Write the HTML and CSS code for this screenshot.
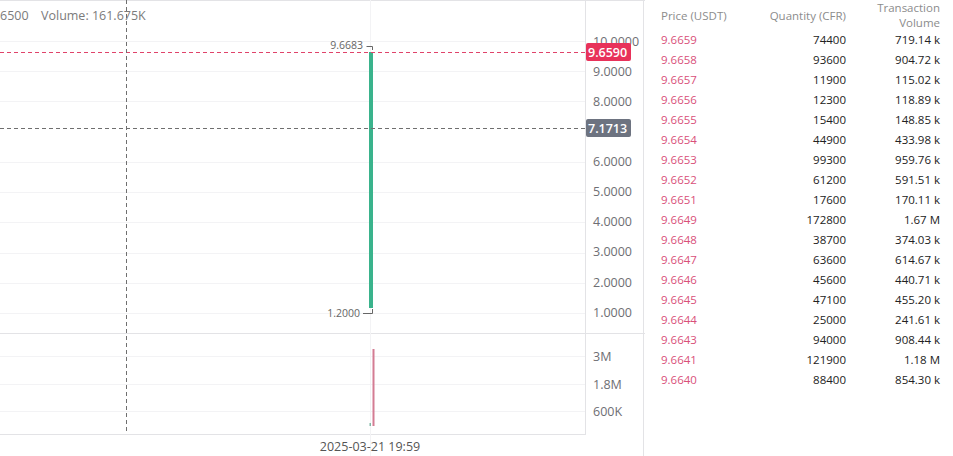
FILE: index.html
```html
<!DOCTYPE html>
<html lang="en">
<head>
<meta charset="utf-8">
<title>Chart and order book</title>
<link rel="stylesheet" href="styles.css">
</head>
<body>
<div class="page">
  <section class="chart">
    <svg class="chart-svg" width="645" height="456" viewBox="0 0 645 456">
      <!-- frame -->
      <line class="frame" x1="0" y1="0.5" x2="645" y2="0.5"/>
      <line class="frame" x1="585.5" y1="0" x2="585.5" y2="434"/>
      <line class="frame" x1="643.5" y1="0" x2="643.5" y2="456"/>
      <line class="frame" x1="0" y1="333.5" x2="645" y2="333.5"/>
      <line class="frame" x1="0" y1="434.5" x2="586" y2="434.5"/>
      <!-- grid -->
      <g class="grid">
        <line x1="0" y1="41.5" x2="585" y2="41.5"/>
        <line x1="0" y1="71.5" x2="585" y2="71.5"/>
        <line x1="0" y1="101.5" x2="585" y2="101.5"/>
        <line x1="0" y1="162.5" x2="585" y2="162.5"/>
        <line x1="0" y1="192.5" x2="585" y2="192.5"/>
        <line x1="0" y1="222.5" x2="585" y2="222.5"/>
        <line x1="0" y1="253.5" x2="585" y2="253.5"/>
        <line x1="0" y1="283.5" x2="585" y2="283.5"/>
        <line x1="0" y1="313.5" x2="585" y2="313.5"/>
        <line x1="0" y1="356.5" x2="585" y2="356.5"/>
        <line x1="0" y1="384.5" x2="585" y2="384.5"/>
        <line x1="0" y1="411.5" x2="585" y2="411.5"/>
        <line x1="370.5" y1="0" x2="370.5" y2="456"/>
      </g>
      <!-- legend -->
      <text class="legend" x="0" y="20">6500</text>
      <text class="legend" x="41" y="20">Volume: 161.675K</text>
      <!-- price axis labels -->
      <g class="axis">
        <text x="593" y="46">10.0000</text>
        <text x="593" y="76">9.0000</text>
        <text x="593" y="106">8.0000</text>
        <text x="593" y="166">6.0000</text>
        <text x="593" y="196">5.0000</text>
        <text x="593" y="226">4.0000</text>
        <text x="593" y="256">3.0000</text>
        <text x="593" y="287">2.0000</text>
        <text x="593" y="317">1.0000</text>
        <text x="593" y="361">3M</text>
        <text x="593" y="389">1.8M</text>
        <text x="593" y="416">600K</text>
      </g>
      <!-- candle -->
      <rect class="up" x="369" y="52" width="4" height="256"/>
      <text class="mark" x="363" y="49" text-anchor="end">9.6683</text>
      <path class="tick" d="M366.5 46.5 H372.5 V50"/>
      <text class="mark" x="360" y="317" text-anchor="end">1.2000</text>
      <path class="tick" d="M363 313.5 H372.5 V309"/>
      <!-- volume -->
      <rect class="vol" x="372.5" y="349" width="2" height="77"/>
      <rect class="vol-up" x="369.5" y="423" width="1.5" height="3"/>
      <!-- last price line -->
      <line class="last" x1="0" y1="52.5" x2="586" y2="52.5"/>
      <rect class="last-box" x="586" y="43" width="45" height="18" rx="2"/>
      <text class="tag" x="588" y="57">9.6590</text>
      <!-- crosshair -->
      <line class="cross" x1="126.5" y1="0" x2="126.5" y2="434"/>
      <line class="cross" x1="0" y1="128.5" x2="586" y2="128.5"/>
      <rect class="cross-box" x="586" y="119" width="45" height="18" rx="2"/>
      <text class="tag" x="588" y="133">7.1713</text>
      <!-- time -->
      <text class="time" x="370" y="451" text-anchor="middle">2025-03-21 19:59</text>
    </svg>
  </section>
  <section class="book">
    <div class="book-head">
      <span class="col-price">Price (USDT)</span>
      <span class="col-num">Quantity (CFR)</span>
      <span class="col-num">Transaction Volume</span>
    </div>
    <div class="book-rows">
      <div class="row"><span class="price">9.6659</span><span class="num">74400</span><span class="num">719.14 k</span></div>
      <div class="row"><span class="price">9.6658</span><span class="num">93600</span><span class="num">904.72 k</span></div>
      <div class="row"><span class="price">9.6657</span><span class="num">11900</span><span class="num">115.02 k</span></div>
      <div class="row"><span class="price">9.6656</span><span class="num">12300</span><span class="num">118.89 k</span></div>
      <div class="row"><span class="price">9.6655</span><span class="num">15400</span><span class="num">148.85 k</span></div>
      <div class="row"><span class="price">9.6654</span><span class="num">44900</span><span class="num">433.98 k</span></div>
      <div class="row"><span class="price">9.6653</span><span class="num">99300</span><span class="num">959.76 k</span></div>
      <div class="row"><span class="price">9.6652</span><span class="num">61200</span><span class="num">591.51 k</span></div>
      <div class="row"><span class="price">9.6651</span><span class="num">17600</span><span class="num">170.11 k</span></div>
      <div class="row"><span class="price">9.6649</span><span class="num">172800</span><span class="num">1.67 M</span></div>
      <div class="row"><span class="price">9.6648</span><span class="num">38700</span><span class="num">374.03 k</span></div>
      <div class="row"><span class="price">9.6647</span><span class="num">63600</span><span class="num">614.67 k</span></div>
      <div class="row"><span class="price">9.6646</span><span class="num">45600</span><span class="num">440.71 k</span></div>
      <div class="row"><span class="price">9.6645</span><span class="num">47100</span><span class="num">455.20 k</span></div>
      <div class="row"><span class="price">9.6644</span><span class="num">25000</span><span class="num">241.61 k</span></div>
      <div class="row"><span class="price">9.6643</span><span class="num">94000</span><span class="num">908.44 k</span></div>
      <div class="row"><span class="price">9.6641</span><span class="num">121900</span><span class="num">1.18 M</span></div>
      <div class="row"><span class="price">9.6640</span><span class="num">88400</span><span class="num">854.30 k</span></div>
    </div>
  </section>
</div>
</body>
</html>
```

FILE: styles.css
```css
* { box-sizing: border-box; }
html, body { margin: 0; padding: 0; background: #fff; }
body { font-family: "Open Sans", "Noto Sans", sans-serif; }

.page {
  display: flex;
  width: 953px;
  height: 456px;
  overflow: hidden;
}

.chart { flex: none; width: 645px; height: 456px; }
.chart-svg { display: block; font-family: "Open Sans", "Noto Sans", sans-serif; }

.frame { stroke: #e3e3e6; stroke-width: 1; }
.grid line { stroke: #f3f3f5; stroke-width: 1; }

.legend { font-size: 12.5px; fill: #7b7b7b; }
.axis text { font-size: 12.5px; fill: #6e6e73; }
.mark { font-size: 10.5px; fill: #666; }
.tick { stroke: #666; fill: none; stroke-width: 1; }

.up { fill: #3ab38c; }
.vol { fill: #d47c93; }
.vol-up { fill: #7fb8a6; }

.last { stroke: #e0436a; stroke-width: 1; stroke-dasharray: 4 3; }
.last-box { fill: #e8325a; }
.cross { stroke: #6f6f6f; stroke-width: 1; stroke-dasharray: 4 3; }
.cross-box { fill: #6d7380; }
.tag { font-size: 12.5px; fill: #fff; font-weight: 600; }

.time { font-size: 12.5px; fill: #555; }

.book {
  flex: 1;
  padding: 0 13px 0 16px;
  font-size: 11.5px;
  color: #222;
}

.book-head,
.row {
  display: grid;
  grid-template-columns: 92px 93px 94px;
  align-items: center;
}

.book-head {
  height: 30px;
  color: #8c8c8c;
  line-height: 15px;
}

.col-price { text-align: left; }
.col-num { text-align: right; }

.row { height: 20px; line-height: 20px; }
.price { color: #d9507a; }
.num { text-align: right; }
```
